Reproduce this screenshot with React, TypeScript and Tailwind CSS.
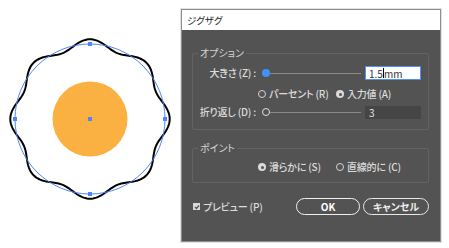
import React from 'react';

const font = "[font-family:'Noto_Sans_CJK_JP','Noto_Sans',sans-serif] [font-feature-settings:'palt']";

function wavePath() {
  const cx = 90;
  const cy = 119;
  const pts: string[] = [];
  for (let i = 0; i <= 320; i++) {
    const t = (i / 320) * Math.PI * 2;
    const r = 75.5 + 4.2 * Math.cos(8 * t);
    const x = cx + r * Math.sin(t);
    const y = cy - r * Math.cos(t);
    pts.push(`${i === 0 ? 'M' : 'L'}${x.toFixed(2)} ${y.toFixed(2)}`);
  }
  return pts.join(' ') + ' Z';
}

function Artwork() {
  const anchors = [
    [90, 44],
    [165, 119],
    [90, 194],
    [15, 119],
    [90, 119],
  ];
  return (
    <svg width="180" height="248" viewBox="0 0 180 248" className="shrink-0">
      <circle cx="90" cy="119" r="37.5" fill="#fbb141" />
      <path d={wavePath()} fill="none" stroke="#000" strokeWidth={2} />
      <circle cx="90" cy="119" r="75" fill="none" stroke="#4f86f7" strokeWidth={1} />
      {anchors.map(([x, y], i) => (
        <rect key={i} x={x - 2} y={y - 2} width="4" height="4" fill="#4f86f7" />
      ))}
    </svg>
  );
}

function Radio({ checked, label }: { checked?: boolean; label: string }) {
  return (
    <div className="flex items-center gap-[3px]">
      {checked ? (
        <span className="w-[8px] h-[8px] rounded-full bg-[#dadada] flex items-center justify-center">
          <span className="w-[3px] h-[3px] rounded-full bg-[#535353]" />
        </span>
      ) : (
        <span className="w-[8px] h-[8px] rounded-full border border-[#d4d4d4]" />
      )}
      <span className="text-[10px] leading-[14px] tracking-[-0.2px] text-[#dcdcdc] font-medium whitespace-nowrap">{label}</span>
    </div>
  );
}

function Group({ title, className, children }: { title: string; className: string; children: React.ReactNode }) {
  return (
    <div className={`relative ml-[10px] w-[237px] border border-[#636363] rounded-[2px] ${className}`}>
      <span className="absolute -top-[8px] left-[5px] px-[2px] bg-[#535353] text-[10px] leading-[14px] text-[#d4d4d4]">
        {title}
      </span>
      {children}
    </div>
  );
}

export default function App() {
  return (
    <div className={`flex items-start w-[449px] h-[248px] bg-white overflow-hidden ${font}`}>
      <Artwork />
      <div className="mt-[9px] ml-[1px] w-[260px] h-[233px] border border-[#8e8e8e] shadow-[0_0_0_1px_#e2e2e2] flex flex-col">
        {/* Title */}
        <div className="h-[20px] bg-white flex items-center pl-[5px] text-[9.5px] text-[#222]">ジグザグ</div>

        {/* Body */}
        <div className="flex-1 bg-[#535353] flex flex-col">
          <Group title="オプション" className="mt-[23px] h-[77px] pt-[12px]">
            <div className="flex items-center h-[14px]">
              <span className="w-[63px] text-right text-[10px] leading-[14px] tracking-[-0.2px] text-[#dcdcdc] font-medium whitespace-nowrap">
                大きさ (Z) :
              </span>
              <div className="ml-[6px] w-[99px] flex items-center">
                <span className="w-[8px] h-[8px] rounded-full bg-[#3d94f6] shrink-0" />
                <span className="flex-1 h-px bg-[#8a8a8a]" />
              </div>
              <div className="ml-[4px] w-[56px] h-[14px] bg-white border border-[#4d90fe] flex items-center pl-[3px] text-[10px] text-[#333]">
                1.5<span className="inline-block w-px h-[10px] bg-[#000]" />mm
              </div>
            </div>
            <div className="flex items-center h-[14px] mt-[7px] ml-[65px]">
              <div className="w-[78px]">
                <Radio label="パーセント (R)" />
              </div>
              <Radio checked label="入力値 (A)" />
            </div>
            <div className="flex items-center h-[14px] mt-[4px]">
              <span className="w-[63px] text-right text-[10px] leading-[14px] tracking-[-0.2px] text-[#dcdcdc] font-medium whitespace-nowrap">
                折り返し (D) :
              </span>
              <div className="ml-[6px] w-[99px] flex items-center">
                <span className="w-[8px] h-[8px] rounded-full border-[1.5px] border-[#e0e0e0] shrink-0" />
                <span className="flex-1 h-px bg-[#8a8a8a]" />
              </div>
              <div className="ml-[4px] w-[56px] h-[13px] bg-[#454545] flex items-center pl-[4px] text-[10px] text-[#e6e6e6]">
                3
              </div>
            </div>
          </Group>

          <Group title="ポイント" className="mt-[18px] h-[35px] pt-[11px]">
            <div className="flex items-center h-[14px] ml-[65px]">
              <div className="w-[78px]">
                <Radio checked label="滑らかに (S)" />
              </div>
              <Radio label="直線的に (C)" />
            </div>
          </Group>

          <div className="flex items-center mt-[15px] h-[17px]">
            <div className="ml-[11px] flex items-center gap-[3px]">
              <span className="w-[7px] h-[7px] bg-[#d8d8d8] flex items-center justify-center">
                <svg width="6" height="6" viewBox="0 0 6 6">
                  <path d="M1 3 L2.5 4.5 L5 1.5" fill="none" stroke="#535353" strokeWidth={1.2} />
                </svg>
              </span>
              <span className="text-[10px] leading-[14px] tracking-[-0.2px] text-[#dcdcdc] font-medium">プレビュー (P)</span>
            </div>
            <button className="ml-auto w-[64px] h-[17px] rounded-full border-[1.5px] border-[#f0f0f0] text-[10px] font-semibold text-white flex items-center justify-center">
              OK
            </button>
            <button className="ml-[3px] mr-[11px] w-[66px] h-[17px] rounded-full border-[1.5px] border-[#e8e8e8] text-[10px] font-semibold text-[#eee] flex items-center justify-center">
              キャンセル
            </button>
          </div>
        </div>
      </div>
    </div>
  );
}
